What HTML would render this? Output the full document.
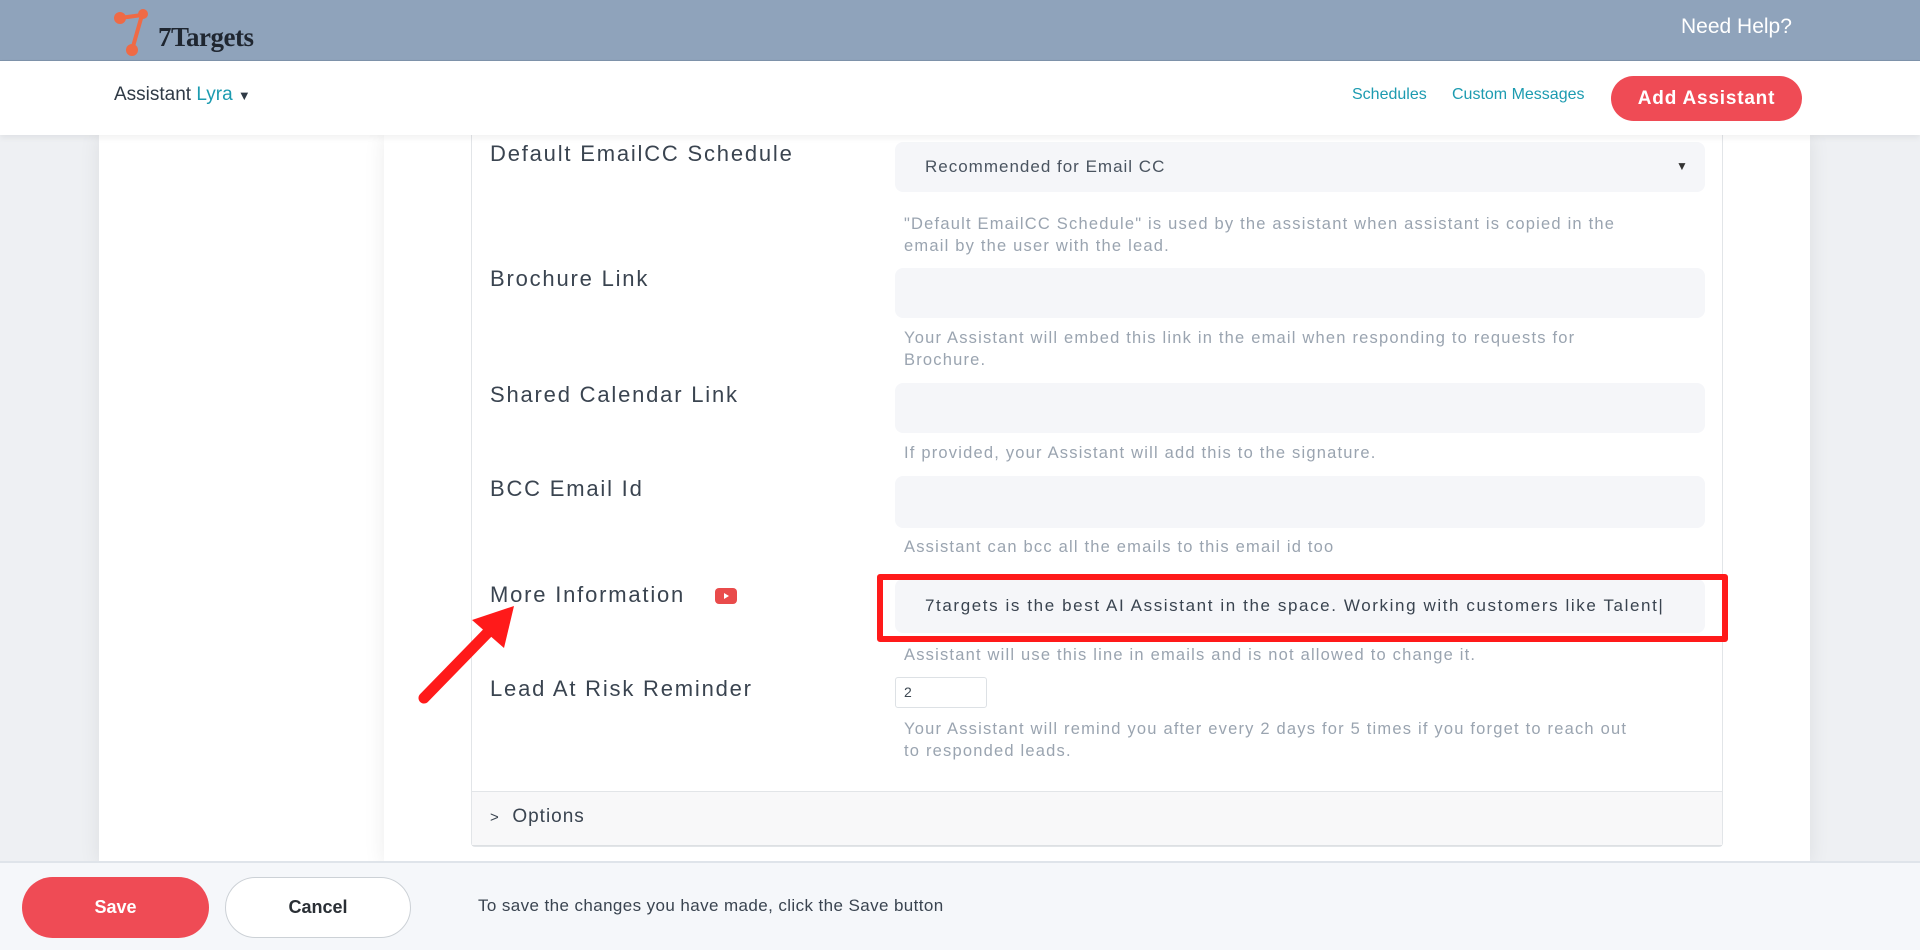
<!DOCTYPE html>
<html><head><meta charset="utf-8"><style>
*{box-sizing:border-box;margin:0;padding:0}
body{width:1920px;height:950px;overflow:hidden;background:#eef0f3;font-family:"Liberation Sans",sans-serif;position:relative;color:#3d4852}
.a{position:absolute}
.top{left:0;top:0;width:1920px;height:61px;background:#8fa3bb;border-bottom:1px solid #7f93ab}
.nav{left:0;top:61px;width:1920px;height:74px;background:#fff;box-shadow:0 3px 6px rgba(0,0,0,.06);z-index:3}
.lbl{left:490px;font-size:22px;color:#3a4450;letter-spacing:1.8px}
.inp{left:895px;width:810px;background:#f5f6f9;border-radius:8px}
.help{left:904px;font-size:16.5px;color:#9aa4b0;line-height:22px;width:775px;letter-spacing:1.2px}
</style></head><body>
<div class="a top"></div>
<svg class="a" style="left:112px;top:4px" width="60" height="56" viewBox="0 0 60 56">
<line x1="8" y1="14" x2="30" y2="11" stroke="#ef6a45" stroke-width="4"/>
<line x1="30" y1="11" x2="20" y2="46" stroke="#ef6a45" stroke-width="4"/>
<circle cx="8" cy="14" r="6" fill="#ef6a45"/><circle cx="31" cy="10" r="5" fill="#ef6a45"/><circle cx="20" cy="46" r="6" fill="#ef6a45"/>
</svg>
<div class="a" style="left:158px;top:22px;font-family:'Liberation Serif',serif;font-size:27px;color:#1f2630;font-weight:bold;letter-spacing:-.5px">7Targets</div>
<div class="a" style="left:1681px;top:15px;font-size:21px;color:#fff">Need Help?</div>
<div class="a nav"></div>
<div class="a" style="left:114px;top:84px;font-size:19px;color:#2f3a46;z-index:4">Assistant <span style="color:#1c9bb0">Lyra</span> <span style="font-size:13px">▼</span></div>
<div class="a" style="left:1352px;top:86px;font-size:16px;color:#1c9bb0;z-index:4">Schedules</div>
<div class="a" style="left:1452px;top:86px;font-size:16px;color:#1c9bb0;z-index:4">Custom Messages</div>
<div class="a" style="left:1611px;top:76px;width:191px;height:45px;border-radius:23px;background:#ef4b55;color:#fff;font-weight:bold;font-size:19px;text-align:center;line-height:45px;z-index:4;letter-spacing:.8px">Add Assistant</div>

<div class="a" style="left:99px;top:135px;width:285px;height:730px;background:#fff;box-shadow:0 0 20px rgba(0,0,0,.08)"></div>
<div class="a" style="left:384px;top:135px;width:1426px;height:730px;background:#fff;box-shadow:0 0 20px rgba(0,0,0,.08)"></div>
<div class="a" style="left:471px;top:135px;width:1252px;height:712px;border:1px solid #e2e5e8;border-top:none;border-radius:0 0 4px 4px"></div>

<div class="a lbl" style="top:141px">Default EmailCC Schedule</div>
<div class="a inp" style="top:142px;height:50px"></div>
<div class="a" style="left:925px;top:157px;font-size:17px;color:#4a5460;letter-spacing:1px">Recommended for Email CC</div>
<div class="a" style="left:1676px;top:159px;font-size:12px;color:#333">▼</div>
<div class="a help" style="top:213px;width:800px">"Default EmailCC Schedule" is used by the assistant when assistant is copied in the<br>email by the user with the lead.</div>

<div class="a lbl" style="top:266px">Brochure Link</div>
<div class="a inp" style="top:268px;height:50px"></div>
<div class="a help" style="top:327px">Your Assistant will embed this link in the email when responding to requests for<br>Brochure.</div>

<div class="a lbl" style="top:382px">Shared Calendar Link</div>
<div class="a inp" style="top:383px;height:50px"></div>
<div class="a help" style="top:442px">If provided, your Assistant will add this to the signature.</div>

<div class="a lbl" style="top:476px">BCC Email Id</div>
<div class="a inp" style="top:476px;height:52px"></div>
<div class="a help" style="top:536px">Assistant can bcc all the emails to this email id too</div>

<div class="a lbl" style="top:582px">More Information</div>
<svg class="a" style="left:715px;top:588px" width="22" height="16" viewBox="0 0 22 16"><rect width="22" height="16" rx="4" fill="#e94b4b"/><path d="M9 5l5 3-5 3z" fill="#fff"/></svg>
<div class="a inp" style="top:579px;height:54px"></div>
<div class="a" style="left:925px;top:596px;font-size:17px;color:#3a4450;letter-spacing:1.6px;white-space:nowrap">7targets is the best AI Assistant in the space. Working with customers like Talent|</div>
<div class="a" style="left:877px;top:574px;width:851px;height:68px;border:6px solid #ff1a1a;border-radius:3px"></div>
<div class="a help" style="top:644px">Assistant will use this line in emails and is not allowed to change it.</div>

<div class="a lbl" style="top:676px">Lead At Risk Reminder</div>
<div class="a" style="left:895px;top:677px;width:92px;height:31px;border:1px solid #dde1e5;border-radius:3px;font-size:14px;padding:6px 8px">2</div>
<div class="a help" style="top:718px;width:800px">Your Assistant will remind you after every 2 days for 5 times if you forget to reach out<br>to responded leads.</div>

<div class="a" style="left:472px;top:791px;width:1250px;height:55px;background:#f8f8f9;border-top:1px solid #e2e5e8;border-bottom:1px solid #dde0e3"></div>
<div class="a" style="left:490px;top:806px;font-size:19px;color:#3a4450;letter-spacing:1px"><span style="font-size:15px">&gt;</span>&nbsp; Options</div>

<svg class="a" style="left:410px;top:598px" width="120" height="112" viewBox="0 0 120 112">
<line x1="14" y1="100" x2="90" y2="22" stroke="#ff1a1a" stroke-width="11" stroke-linecap="round"/>
<path d="M104 8 L62 22 L94 50 Z" fill="#ff1a1a"/>
</svg>

<div class="a" style="left:0;top:861px;width:1920px;height:89px;background:#f5f7fa;border-top:2px solid #dfe4ea"></div>
<div class="a" style="left:22px;top:877px;width:187px;height:61px;border-radius:31px;background:#ef4b55;color:#fff;font-weight:bold;font-size:18px;text-align:center;line-height:61px">Save</div>
<div class="a" style="left:225px;top:877px;width:186px;height:61px;border-radius:31px;background:#fff;border:1px solid #ccd1d6;color:#2a2f35;font-weight:bold;font-size:18px;text-align:center;line-height:59px">Cancel</div>
<div class="a" style="left:478px;top:896px;font-size:17px;color:#3a4450;letter-spacing:.4px">To save the changes you have made, click the Save button</div>
</body></html>
